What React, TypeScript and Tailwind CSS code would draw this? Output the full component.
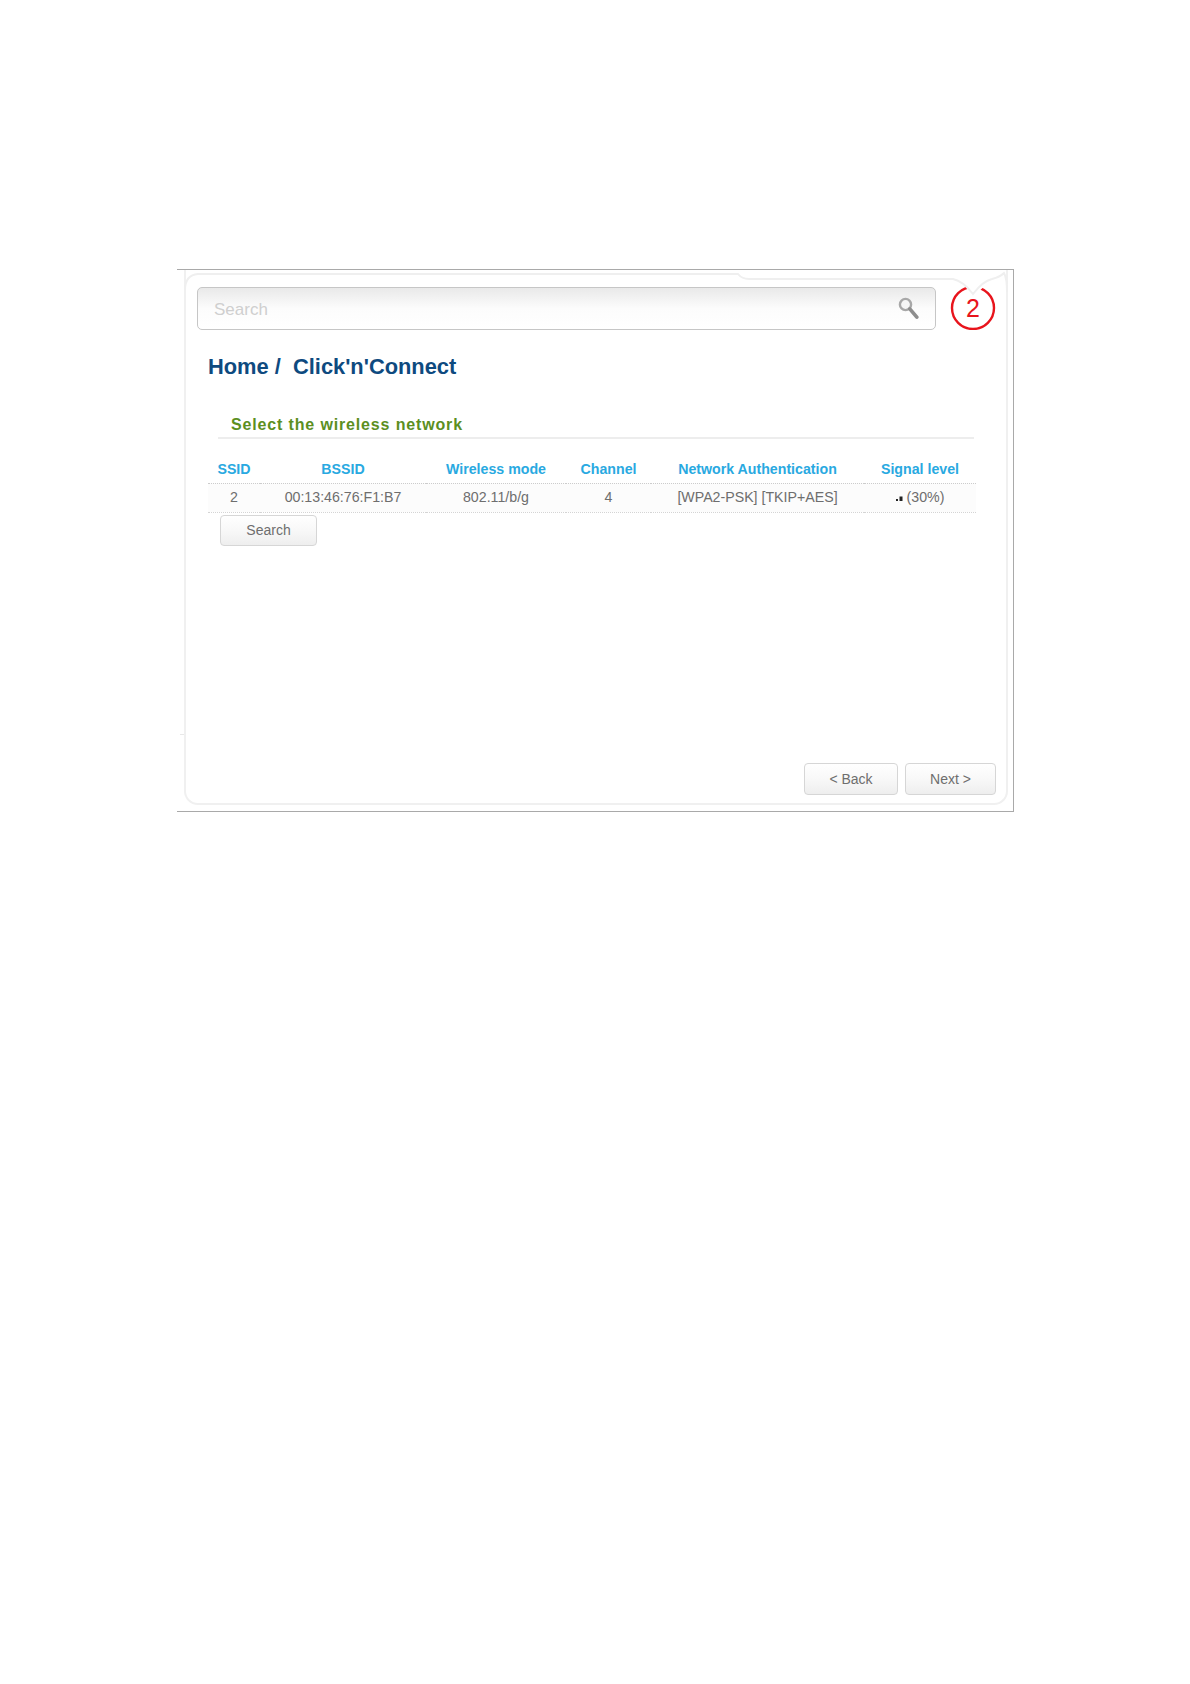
const columns = [
  { label: "SSID", value: "2", width: "w-[52px]" },
  { label: "BSSID", value: "00:13:46:76:F1:B7", width: "w-[166px]" },
  { label: "Wireless mode", value: "802.11/b/g", width: "w-[140px]" },
  { label: "Channel", value: "4", width: "w-[85px]" },
  { label: "Network Authentication", value: "[WPA2-PSK] [TKIP+AES]", width: "w-[213px]" },
  { label: "Signal level", value: "(30%)", width: "w-[112px]" },
];

function SearchIcon() {
  return (
    <svg width="21" height="23" viewBox="0 0 21 23" fill="none">
      <circle cx="7.5" cy="7.5" r="5.6" stroke="#a8a8a8" strokeWidth="2.4" fill="#f6f6f6" />
      <path d="M11.8 11.8 L18.8 20.2" stroke="#8e8e8e" strokeWidth="3.6" strokeLinecap="round" />
    </svg>
  );
}

function SignalIcon() {
  return (
    <svg width="7" height="5" viewBox="0 0 7 5" className="mr-[4px] inline-block">
      <rect x="0" y="3" width="2" height="2" fill="#222" />
      <rect x="3.5" y="0.5" width="3" height="4.5" fill="#222" />
    </svg>
  );
}

function Button({ label, className }: { label: string; className: string }) {
  return (
    <button
      className={`flex items-center justify-center rounded-[4px] border border-[#d6d6d6] bg-gradient-to-b from-[#ffffff] via-[#f8f8f8] to-[#eeeeee] text-[14px] text-[#6e6e6e] ${className}`}
    >
      {label}
    </button>
  );
}

// curved top edge of the panel, with the notch that cuts into the circled number
function PanelTop() {
  return (
    <svg
      width="837"
      height="60"
      viewBox="0 0 837 60"
      fill="none"
      className="pointer-events-none absolute left-0 top-0"
    >
      <circle cx="796" cy="38" r="21" stroke="#e8141c" strokeWidth="2.4" fill="#ffffff" />
      <path d="M778 2 H815 V9 L796 27 Z" fill="#ffffff" />
      <path
        d="M8 20 Q8 5 21 4 H561 Q565 9 572 9 H776 Q786 11 796 24 Q806 11 815 9 Q823 7 827 3 Q830 8 830 22"
        stroke="#efefef"
        strokeWidth="2"
      />
      <text
        x="796"
        y="47"
        textAnchor="middle"
        fontSize="25"
        fill="#e8141c"
        fontFamily="'Liberation Sans', Arial, sans-serif"
      >
        2
      </text>
    </svg>
  );
}

export default function App() {
  return (
    <div className="h-[1684px] w-[1190px] bg-white pl-[177px] pt-[269px] font-['Liberation_Sans',Arial,sans-serif]">
      <div className="relative h-[543px] w-[837px] border-b border-r border-t border-[#a9a9a9] pb-[6px] pl-[7px] pr-[5px]">
        <PanelTop />
        <div className="absolute left-[3px] top-[464px] h-px w-[4px] bg-[#e8e8e8]" />

        <div className="flex h-full flex-col rounded-b-[14px] border-2 border-t-0 border-[#f0f0f0] pl-[11px] pr-[10px] pt-[17px]">
          <div className="flex h-[43px] w-[739px] items-center justify-between rounded-[5px] border border-[#c6c6c6] bg-gradient-to-b from-[#e9e9e9] via-[#fcfcfc] to-[#ffffff] pl-[16px] pr-[16px]">
            <span className="pt-[2px] text-[17px] text-[#cfcfcf]">Search</span>
            <SearchIcon />
          </div>

          <h1 className="ml-[11px] mt-[24px] text-[21.85px] font-bold leading-[26px] text-[#0e4a7f] whitespace-pre">
            {"Home /  Click'n'Connect"}
          </h1>

          <div className="ml-[21px] mt-[35px] w-[756px] border-b-2 border-[#ededed] pb-[2px] pl-[13px] text-[16px] font-bold leading-[20px] tracking-[0.85px] text-[#5c8f1f]">
            Select the wireless network
          </div>

          <table className="ml-[11px] mt-[13px] w-[768px] table-fixed border-collapse">
            <thead>
              <tr className="border-b border-dotted border-[#cccccc]">
                {columns.map((c) => (
                  <th
                    key={c.label}
                    className={`${c.width} h-[31px] pt-[5px] text-center text-[14.2px] font-bold text-[#29a9e1]`}
                  >
                    {c.label}
                  </th>
                ))}
              </tr>
            </thead>
            <tbody>
              <tr className="border-b border-dotted border-[#d4d4d4] bg-[#fcfcfc]">
                {columns.map((c) => (
                  <td key={c.label} className="h-[29px] pt-[1px] text-center text-[14.2px] text-[#6e6e6e]">
                    {c.label === "Signal level" && <SignalIcon />}
                    {c.value}
                  </td>
                ))}
              </tr>
            </tbody>
          </table>

          <Button label="Search" className="ml-[23px] mt-[2px] h-[31px] w-[97px]" />

          <div className="mb-[8px] mt-auto flex justify-end gap-[7px]">
            <Button label="< Back" className="h-[32px] w-[94px]" />
            <Button label="Next >" className="h-[32px] w-[91px]" />
          </div>
        </div>
      </div>
    </div>
  );
}
